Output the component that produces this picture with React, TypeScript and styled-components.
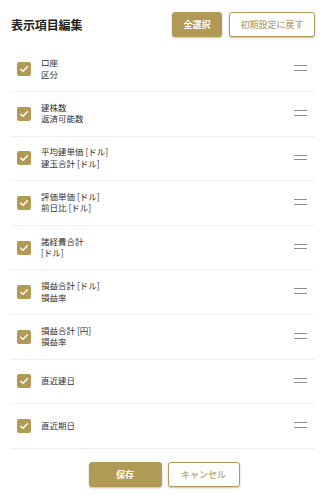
import React, { useState } from 'react'
import styled, { createGlobalStyle } from 'styled-components'

const gold = '#b09a55'

const GlobalStyle = createGlobalStyle`
  html, body {
    margin: 0;
    padding: 0;
    background: #fff;
  }
  body {
    font-family: 'Noto Sans CJK JP', 'Noto Sans', sans-serif;
    color: #333;
  }
`

const Panel = styled.div`
  width: 328px;
  height: 500px;
  box-sizing: border-box;
  padding: 12px 13px 0 11px;
  display: flex;
  flex-direction: column;
`

const Header = styled.div`
  display: flex;
  align-items: center;
  justify-content: space-between;
  height: 25px;
`

const Title = styled.h1`
  margin: 0;
  font-size: 12px;
  font-weight: 700;
  color: #222;
  letter-spacing: -0.1px;
`

const HeaderButtons = styled.div`
  display: flex;
  gap: 7px;
`

const Button = styled.button<{ $primary?: boolean; $width: number; $height: number }>`
  width: ${(p) => p.$width}px;
  height: ${(p) => p.$height}px;
  box-sizing: border-box;
  border-radius: 3px;
  font-family: inherit;
  font-size: 9px;
  font-weight: ${(p) => (p.$primary ? 700 : 500)};
  padding: 0;
  cursor: pointer;
  border: 1px solid ${gold};
  background: ${(p) => (p.$primary ? gold : '#fff')};
  color: ${(p) => (p.$primary ? '#fff' : '#b4a273')};
  box-shadow: 0 1px 2px rgba(0, 0, 0, 0.25);
`

const List = styled.div`
  margin-top: 10.4px;
  display: flex;
  flex-direction: column;
`

const Row = styled.div`
  height: 44.6px;
  box-sizing: border-box;
  border-bottom: 1px solid #efefef;
  display: flex;
  align-items: center;
  padding: 0 8px 0 6px;
`

const Check = styled.span<{ $on: boolean }>`
  width: 14px;
  height: 14px;
  border-radius: 2px;
  flex: none;
  display: flex;
  align-items: center;
  justify-content: center;
  background: ${(p) => (p.$on ? gold : '#fff')};
  border: ${(p) => (p.$on ? 'none' : `1px solid ${gold}`)};
  box-sizing: border-box;
  cursor: pointer;
`

const Label = styled.div`
  flex: 1;
  margin-left: 10px;
  font-size: 8.5px;
  line-height: 11.5px;
  color: #333;
  margin-top: -1px;
`

const Handle = styled.span`
  width: 13px;
  height: 5.5px;
  flex: none;
  border-top: 1.5px solid #8e8e8e;
  border-bottom: 1.5px solid #8e8e8e;
  box-sizing: border-box;
  margin-top: -2px;
`

const Footer = styled.div`
  margin-top: 13px;
  display: flex;
  justify-content: center;
  gap: 6px;
  padding-left: 2px;
`

const items = [
  ['口座', '区分'],
  ['建株数', '返済可能数'],
  ['平均建単価 [ドル]', '建玉合計 [ドル]'],
  ['評価単価 [ドル]', '前日比 [ドル]'],
  ['諸経費合計', '[ドル]'],
  ['損益合計 [ドル]', '損益率'],
  ['損益合計 [円]', '損益率'],
  ['直近建日'],
  ['直近期日'],
]

const CheckMark = () => (
  <svg width='10' height='10' viewBox='0 0 10 10'>
    <path d='M1.8 5.2 L4 7.3 L8.3 2.8' fill='none' stroke='#fff' strokeWidth='1.5' strokeLinecap='round' strokeLinejoin='round' />
  </svg>
)

const App = () => {
  const [checked, setChecked] = useState<boolean[]>(items.map(() => true))

  const toggle = (i: number) => {
    setChecked((prev) => prev.map((v, j) => (j === i ? !v : v)))
  }

  return (
    <>
      <GlobalStyle />
      <Panel>
        <Header>
          <Title>表示項目編集</Title>
          <HeaderButtons>
            <Button $primary $width={50} $height={25} onClick={() => setChecked(items.map(() => true))}>全選択</Button>
            <Button $width={86} $height={25}>初期設定に戻す</Button>
          </HeaderButtons>
        </Header>
        <List>
          {items.map((lines, i) => (
            <Row key={i}>
              <Check $on={checked[i]} onClick={() => toggle(i)}>
                {checked[i] && <CheckMark />}
              </Check>
              <Label>
                {lines.map((l) => (
                  <div key={l}>{l}</div>
                ))}
              </Label>
              <Handle />
            </Row>
          ))}
        </List>
        <Footer>
          <Button $primary $width={73} $height={25}>保存</Button>
          <Button $width={72} $height={25}>キャンセル</Button>
        </Footer>
      </Panel>
    </>
  )
}

export default App
